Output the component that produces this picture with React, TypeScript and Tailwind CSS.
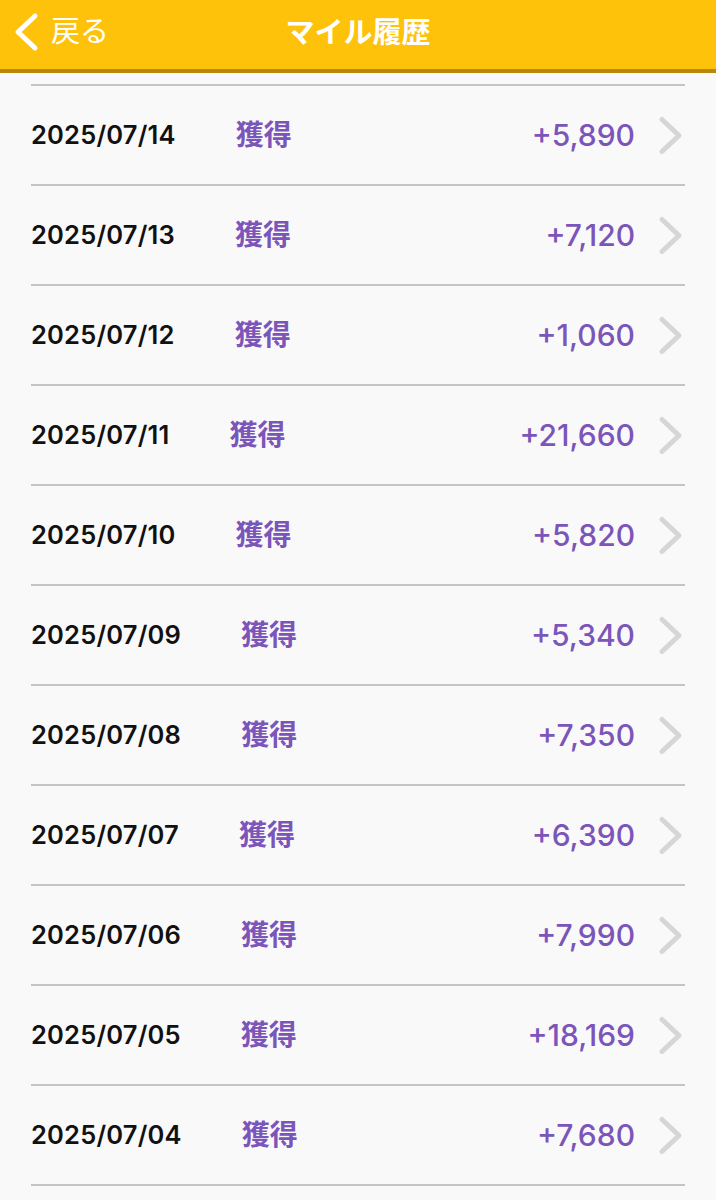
type Entry = { date: string; amount: string };

const ENTRIES: Entry[] = [
    { date: "2025/07/14", amount: "+5,890" },
    { date: "2025/07/13", amount: "+7,120" },
    { date: "2025/07/12", amount: "+1,060" },
    { date: "2025/07/11", amount: "+21,660" },
    { date: "2025/07/10", amount: "+5,820" },
    { date: "2025/07/09", amount: "+5,340" },
    { date: "2025/07/08", amount: "+7,350" },
    { date: "2025/07/07", amount: "+6,390" },
    { date: "2025/07/06", amount: "+7,990" },
    { date: "2025/07/05", amount: "+18,169" },
    { date: "2025/07/04", amount: "+7,680" },
];

const FONT = "font-['Inter','Noto_Sans_CJK_JP',sans-serif]";

/** Disclosure chevron drawn to match the iOS-style thick rounded stroke. */
function Chevron({ dir, className }: { dir: "left" | "right"; className?: string }) {
    const points = dir === "right" ? "4,4 21,20 4,36" : "21,4 4,20 21,36";
    return (
        <svg viewBox="0 0 25 40" className={className} fill="none">
            <polyline
                points={points}
                stroke="currentColor"
                strokeWidth={5}
                strokeLinecap="round"
                strokeLinejoin="round"
            />
        </svg>
    );
}

function HistoryRow({ date, amount }: Entry) {
    return (
        <div className="flex h-[100px] items-center border-b-2 border-[#c4c4c4]">
            <span className="text-[25.5px] font-semibold tracking-[0.2px] text-[#111]">{date}</span>
            <span className="ml-[60px] text-[28px] font-bold text-[#7b55b9]">獲得</span>
            <span className="ml-auto text-[30px] font-medium text-[#7b55b9]">{amount}</span>
            <Chevron dir="right" className="ml-[23px] mr-[2px] h-[41px] w-[25px] text-[#d6d6d6]" />
        </div>
    );
}

export default function App() {
    return (
        <div className={`h-[1200px] overflow-hidden bg-[#f9f9f9] ${FONT}`}>
            {/* Header */}
            <header className="relative flex h-[73px] items-center border-b-[4px] border-[#b8870c] bg-[#ffc20b] pb-[5px] pl-[14px]">
                <div className="flex items-center gap-[12px] text-white">
                    <Chevron dir="left" className="h-[40px] w-[25px]" />
                    <span className="text-[29px] font-normal">戻る</span>
                </div>
                <h1 className="absolute left-1/2 top-[11px] -translate-x-1/2 text-[29px] font-bold text-white">マイル履歴</h1>
            </header>

            {/* List */}
            <div className="mx-[31px] mt-[11px] border-t-2 border-[#c4c4c4]">
                {ENTRIES.map((e) => (
                    <HistoryRow key={e.date} {...e} />
                ))}
            </div>
        </div>
    );
}
